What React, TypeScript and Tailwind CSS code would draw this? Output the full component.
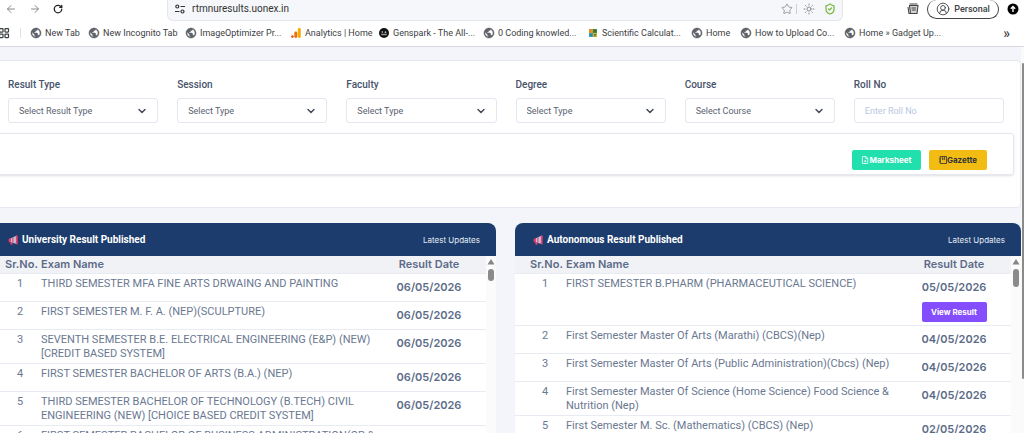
import {
  ArrowLeft,
  ArrowRight,
  ChevronDown,
  CircleUserRound,
  LayoutGrid,
  RotateCw,
  ShieldCheck,
  Star,
  Sun,
} from 'lucide-react';
import clsx from 'clsx';

type Result = { exam: string; date: string; viewable?: boolean };

const bookmarks = [
  { name: 'New Tab', icon: 'globe', width: 'w-[58px]' },
  { name: 'New Incognito Tab', icon: 'globe', width: 'w-[97px]' },
  { name: 'ImageOptimizer Pr...', icon: 'globe', width: 'w-[105px]' },
  { name: 'Analytics | Home', icon: 'analytics', width: 'w-[88px]' },
  { name: 'Genspark - The All-...', icon: 'genspark', width: 'w-[105px]' },
  { name: '0 Coding knowled...', icon: 'globe', width: 'w-[104px]' },
  { name: 'Scientific Calculat...', icon: 'calculator', width: 'w-[104px]' },
  { name: 'Home', icon: 'globe', width: 'w-[49px]' },
  { name: 'How to Upload Co...', icon: 'globe', width: 'w-[104px]' },
  { name: 'Home » Gadget Up...', icon: 'globe', width: 'w-[104px]' },
];

const filters = [
  { id: 'result-type', label: 'Result Type', placeholder: 'Select Result Type' },
  { id: 'session', label: 'Session', placeholder: 'Select Type' },
  { id: 'faculty', label: 'Faculty', placeholder: 'Select Type' },
  { id: 'degree', label: 'Degree', placeholder: 'Select Type' },
  { id: 'course', label: 'Course', placeholder: 'Select Course' },
];

const universityResults: Result[] = [
  { exam: 'THIRD SEMESTER MFA FINE ARTS DRWAING AND PAINTING', date: '06/05/2026' },
  { exam: 'FIRST SEMESTER M. F. A. (NEP)(SCULPTURE)', date: '06/05/2026' },
  { exam: 'SEVENTH SEMESTER B.E. ELECTRICAL ENGINEERING (E&P) (NEW) [CREDIT BASED SYSTEM]', date: '06/05/2026' },
  { exam: 'FIRST SEMESTER BACHELOR OF ARTS (B.A.) (NEP)', date: '06/05/2026' },
  { exam: 'THIRD SEMESTER BACHELOR OF TECHNOLOGY (B.TECH) CIVIL ENGINEERING (NEW) [CHOICE BASED CREDIT SYSTEM]', date: '06/05/2026' },
  { exam: 'FIRST SEMESTER BACHELOR OF BUSINESS ADMINISTRATION(OR &', date: '06/05/2026' },
];

const autonomousResults: Result[] = [
  { exam: 'FIRST SEMESTER B.PHARM (PHARMACEUTICAL SCIENCE)', date: '05/05/2026', viewable: true },
  { exam: 'First Semester Master Of Arts (Marathi) (CBCS)(Nep)', date: '04/05/2026' },
  { exam: 'First Semester Master Of Arts (Public Administration)(Cbcs) (Nep)', date: '04/05/2026' },
  { exam: 'First Semester Master Of Science (Home Science) Food Science & Nutrition (Nep)', date: '04/05/2026' },
  { exam: 'First Semester M. Sc. (Mathematics) (CBCS) (Nep)', date: '02/05/2026' },
];

function BookmarkIcon({ icon }: { icon: string }) {
  if (icon === 'analytics') {
    return (
      <svg viewBox="0 0 10 10" className="size-2.5 shrink-0">
        <rect x="6.8" y="0" width="3" height="10" rx="1.4" fill="#f9ab00" />
        <rect x="3.3" y="3.6" width="3" height="6.4" rx="1.4" fill="#e8710a" />
        <circle cx="1.4" cy="8.6" r="1.4" fill="#e8562a" />
      </svg>
    );
  }
  if (icon === 'genspark') {
    return (
      <svg viewBox="0 0 10 10" className="size-2.5 shrink-0">
        <circle cx="5" cy="5" r="5" fill="#111" />
        <circle cx="3.3" cy="4" r=".8" fill="#ddd" />
        <path d="M6.4 2.800l.4 1 1 .4-1 .4-.4 1-.4-1-1-.4 1-.4z" fill="#ddd" />
        <path d="M2.200 5.800h5.600v1.400H2.200z" fill="#999" />
      </svg>
    );
  }
  if (icon === 'calculator') {
    return (
      <svg viewBox="0 0 10 10" className="size-2.5 shrink-0">
        <path d="M1 1h4v4H1z" fill="#e0902c" />
        <path d="M5 1h4v4H5z" fill="#3f8f3f" />
        <path d="M1 5h4v4H1z" fill="#3a9fc4" />
        <path d="M5 5h4v4H5z" fill="#c9b52c" />
        <path d="M5.8 2l2 2M7.8 2l-2 2M1.8 7h2.4M6 6.5h2M6 7.8h2" stroke="#37502c" strokeWidth=".6" />
      </svg>
    );
  }
  return (
    <svg viewBox="0 0 24 24" className="size-3 shrink-0 -mx-px">
      <path
        d="M12 2C6.48 2 2 6.48 2 12s4.48 10 10 10 10-4.48 10-10S17.52 2 12 2zm-1 17.93c-3.95-.49-7-3.85-7-7.93 0-.62.08-1.21.21-1.79L9 15v1c0 1.1.9 2 2 2v1.93zm6.9-2.54c-.26-.81-1-1.39-1.9-1.39h-1v-3c0-.55-.45-1-1-1H8v-2h2c.55 0 1-.45 1-1V7h2c1.1 0 2-.9 2-2v-.41c2.93 1.19 5 4.06 5 7.41 0 2.08-.8 3.97-2.1 5.39z"
        fill="#5f6368"
        stroke="#5f6368"
      />
    </svg>
  );
}

function Megaphone() {
  return (
    <svg viewBox="0 0 10 10" className="size-2.5 shrink-0">
      <path d="M1.800 3.200H3v4.200H1.800C.2 7.400.2 3.200 1.800 3.200z" fill="#ea3e6e" />
      <path d="M3 3.200L8.200.8v8L3 7.400z" fill="#c3c9dc" />
      <path d="M4.200 2.700l1.300-.6v6l-1.300-.4z" fill="#d94a78" />
      <path d="M2 7.400h2l.6 2.400H2.800z" fill="#ea3e6e" />
      <rect x="7.800" y=".2" width="1.900" height="9.200" rx=".9" fill="#ea3e6e" />
    </svg>
  );
}

function BrowserBar() {
  return (
    <header className="shrink-0 bg-white border-b border-[#d8d9dc] text-[#3c4043]">
      <div className="h-[21px] flex items-stretch">
        <nav className="w-[167px] shrink-0 flex items-center gap-3 pl-[5px] pb-[3px]">
          <button type="button" aria-label="Back" className="text-[#8a8a8a]">
            <ArrowLeft className="size-3" />
          </button>
          <button type="button" aria-label="Forward" className="text-[#8a8a8a]">
            <ArrowRight className="size-3" />
          </button>
          <button type="button" aria-label="Reload" className="text-[#222]">
            <RotateCw className="size-2.5" strokeWidth={3} />
          </button>
        </nav>
        <div className="flex-1 flex items-center pl-[7px] pr-1.5 pb-[3px] bg-[#f5f7fa] border border-t-0 border-[#e3e6ea] rounded-b-md">
          <svg viewBox="0 0 10 10" className="size-2.5 mr-[7px] shrink-0" fill="none" stroke="#333" strokeWidth="1.2">
            <path d="M5.500 2.500H10M0 7.500h4.500" />
            <circle cx="2.300" cy="2.500" r="1.500" />
            <circle cx="7.500" cy="7.500" r="1.500" />
          </svg>
          <input
            aria-label="Address"
            defaultValue="rtmnuresults.uonex.in"
            className="flex-1 min-w-0 bg-transparent text-[10px] leading-3 text-[#333] outline-none"
          />
          <Star className="size-3 shrink-0 text-[#9a9a9a]" strokeWidth={2} />
          <span className="w-px h-2.5 ml-[3px] mr-1.5 shrink-0 bg-[#d0d0d0]" />
          <Sun className="size-3 shrink-0 text-[#8a8a8a]" strokeWidth={2} />
          <ShieldCheck className="size-3 ml-[9px] shrink-0 text-[#76b83f]" strokeWidth={2.5} />
        </div>
        <div className="w-[181px] shrink-0 flex items-start justify-end gap-2 pr-[5px]">
          <svg viewBox="0 0 12 12" className="size-3 mt-[3px]" fill="none" stroke="#444" strokeWidth="1.1">
            <path d="M2.500 2.500H11L10 10.500H3.500z" fill="#d4d4d4" />
            <path d="M1 4l1 6.500h1.500M2.500 1h8M4.500 5h4.500M4.800 7h4" />
          </svg>
          <button
            type="button"
            className="h-[19px] w-[72px] flex items-center justify-center gap-1 border border-t-0 border-[#444] rounded-full text-[9px] font-medium leading-3"
          >
            <CircleUserRound className="size-3.5" strokeWidth={1.5} />
            Personal
          </button>
          <svg viewBox="0 0 12 12" className="size-3 mt-[3px]">
            <circle cx="6" cy="6" r="5.500" fill="#000" />
            <path d="M6 9V3.500M3.800 5.700L6 3.500l2.200 2.200" fill="none" stroke="#fff" strokeWidth="1.4" />
          </svg>
        </div>
      </div>

      {/* Bookmarks */}
      <div className="h-[25px] flex items-center pb-px text-[9px] leading-3">
        <LayoutGrid className="size-3 -ml-0.5 shrink-0" strokeWidth={2.5} />
        <span className="w-px h-2.5 mx-2.5 bg-[#dfe1e5] shrink-0" />
        {bookmarks.map((b) => (
          <a key={b.name} href="#" className={clsx('flex items-center gap-1 shrink-0 whitespace-nowrap', b.width)}>
            <BookmarkIcon icon={b.icon} />
            {b.name}
          </a>
        ))}
        <button type="button" aria-label="More bookmarks" className="ml-auto mr-3.5 text-sm leading-3 font-medium">
          »
        </button>
      </div>
    </header>
  );
}

function SearchPanel() {
  return (
    <section className="h-[148px] bg-white border border-[#e7e8f2] rounded-sm pt-[18px] pr-1.5">
      <form>
        <div className="grid grid-cols-6 gap-[19px] pl-[17px] pr-2.5">
          {filters.map((f) => (
            <div key={f.id}>
              <label htmlFor={f.id} className="block text-[10px] leading-3 font-medium text-[#47536b]">
                {f.label}
              </label>
              <div className="grid items-center mt-[7px]">
                <select
                  id={f.id}
                  className="col-start-1 row-start-1 w-full h-[25px] px-2.5 appearance-none bg-white border border-[#e4e6f1] rounded-[3px] text-[9px] leading-3 text-[#5b6270]"
                >
                  <option>{f.placeholder}</option>
                </select>
                <ChevronDown
                  className="col-start-1 row-start-1 justify-self-end size-3 mr-2.5 text-[#454c58] pointer-events-none"
                  strokeWidth={3}
                />
              </div>
            </div>
          ))}
          <div>
            <label htmlFor="roll-no" className="block text-[10px] leading-3 font-medium text-[#47536b]">
              Roll No
            </label>
            <input
              id="roll-no"
              placeholder="Enter Roll No"
              className="block w-full h-[25px] mt-[7px] px-2.5 bg-white border border-[#e4e6f1] rounded-[3px] text-[9px] leading-3 placeholder:text-[#b9c6e3]"
            />
          </div>
        </div>
        <div className="h-[42px] mt-2.5 flex items-center justify-end gap-2 pt-3 pr-[26px] border border-[#e4e7f0] rounded-[3px] shadow-sm">
          <button
            type="button"
            className="h-5 w-[69px] flex items-center justify-center rounded-xs bg-[#22e0ad] font-[Inter] text-[8px] font-bold text-white"
          >
            <svg viewBox="0 0 8 8" className="size-2 shrink-0" fill="none" stroke="currentColor" strokeWidth=".8">
              <path d="M1.400.5h3.600l1.800 1.800v5.200H1.400zM4.800.5v2h2" />
              <path d="M2.800 5.200h2M4 4l1.100 1.200L4 6.400" />
            </svg>
            Marksheet
          </button>
          <button
            type="button"
            className="h-5 w-[58px] flex items-center justify-center rounded-xs bg-[#f3bc12] font-[Inter] text-[8px] font-bold text-[#2f3437]"
          >
            <svg viewBox="0 0 8 8" className="size-2 shrink-0" fill="none" stroke="currentColor" strokeWidth=".8">
              <path d="M1.200.5h6.300v7H1.200z" />
              <path d="M3.400.5v3.200l1.100-.8 1.100.8V.5M.2 2.200h1.600M.2 4h1.600M.2 5.800h1.600" />
            </svg>
            Gazette
          </button>
        </div>
      </form>
    </section>
  );
}

function ResultCard({ title, results, thumb }: { title: string; results: Result[]; thumb: string }) {
  return (
    <section className="bg-white rounded-t-lg overflow-hidden">
      <div className="h-[33px] flex items-center gap-1 pl-[18px] pr-4 bg-[#1b3c6c] text-white">
        <Megaphone />
        <h2 className="text-[10px] leading-3 font-bold">{title}</h2>
        <span className="ml-auto font-[Inter] text-[8px] leading-3 text-[#e6ebf4]">Latest Updates</span>
      </div>
      <div className="flex">
        <table className="flex-1 table-fixed border-collapse text-[11px] leading-[14px] text-[#6a7891]">
          <thead>
            <tr className="h-[17px] bg-[#f1f2f6] border-b border-[#e9ebf3] font-[Inter] text-[#5c6b88]">
              <th className="w-[51px] pl-[15px] text-left font-semibold">Sr.No.</th>
              <th className="text-left font-semibold">Exam Name</th>
              <th className="w-[106px] pr-2 font-semibold">Result Date</th>
            </tr>
          </thead>
          <tbody>
            {results.map((r, i) => (
              <tr key={r.exam} className="h-7 align-top border-b border-[#e9ebf3]">
                <td className="pl-[13px] pr-1 pt-[3px] text-center">{i + 1}</td>
                <td className="pt-[3px] pb-0.5">{r.exam}</td>
                <td className="pt-1.5 pr-2 text-center font-[Inter] font-semibold text-[#5c6b88]">
                  {r.date}
                  {r.viewable && (
                    <button
                      type="button"
                      className="block w-[65px] h-5 mt-2 mb-[3px] mx-auto rounded-xs bg-[#844dfd] text-[8px] leading-3 font-bold text-white"
                    >
                      View Result
                    </button>
                  )}
                </td>
              </tr>
            ))}
          </tbody>
        </table>
        {/* Scroll track */}
        <div className="w-2.5 shrink-0 flex flex-col items-center gap-1 pt-[3px] bg-[#fbfbfb]">
          <svg viewBox="0 0 8 6" className="w-2 h-1.5">
            <path d="M4 0l3.500 5.500h-7z" fill="#858585" />
          </svg>
          <span className={clsx('w-1.5 rounded-full bg-[#8b8b8b]', thumb)} />
        </div>
      </div>
    </section>
  );
}

export default function App() {
  return (
    <div className="h-screen flex flex-col overflow-hidden bg-[#f4f5fa] font-[Roboto,sans-serif]">
      <BrowserBar />
      <div className="flex-1 min-h-0 flex">
        <main className="flex-1 min-w-0 pt-[13px] -ml-2.5 overflow-hidden">
          <SearchPanel />
          <div className="grid grid-cols-2 gap-[19px] mt-[15px]">
            <ResultCard title="University Result Published" results={universityResults} thumb="h-3" />
            <ResultCard title="Autonomous Result Published" results={autonomousResults} thumb="h-[18px]" />
          </div>
        </main>
        <div className="w-[3px] shrink-0 flex flex-col items-end pt-4 bg-[#fafafa]">
          <span className="w-0.5 h-[316px] rounded-full bg-[#8b8b8b]" />
        </div>
      </div>
    </div>
  );
}
